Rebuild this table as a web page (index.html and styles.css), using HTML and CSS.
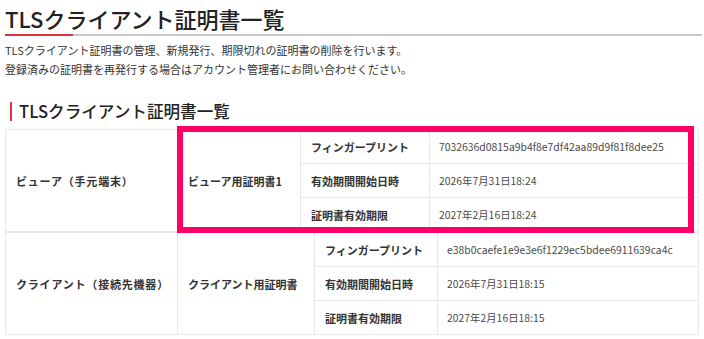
FILE: index.html
```html
<!DOCTYPE html>
<html lang="ja">
<head>
<meta charset="utf-8">
<link rel="stylesheet" href="styles.css">
</head>
<body>
<div class="page">
  <h1 class="title">TLSクライアント証明書一覧</h1>
  <p class="desc">TLSクライアント証明書の管理、新規発行、期限切れの証明書の削除を行います。<br>登録済みの証明書を再発行する場合はアカウント管理者にお問い合わせください。</p>
  <h2 class="section">TLSクライアント証明書一覧</h2>
  <div class="tables">
    <table class="cert cert-a">
      <colgroup><col class="c1"><col class="c2"><col class="c3"><col class="c4"></colgroup>
      <tr>
        <th rowspan="3" class="wide">ビューア（手元端末）</th>
        <th rowspan="3">ビューア用証明書1</th>
        <th>フィンガープリント</th>
        <td>7032636d0815a9b4f8e7df42aa89d9f81f8dee25</td>
      </tr>
      <tr><th>有効期間開始日時</th><td>2026年7月31日18:24</td></tr>
      <tr><th>証明書有効期限</th><td>2027年2月16日18:24</td></tr>
    </table>
    <table class="cert cert-b">
      <colgroup><col class="c1"><col class="c2"><col class="c3"><col class="c4"></colgroup>
      <tr>
        <th rowspan="3" class="wide">クライアント（接続先機器）</th>
        <th rowspan="3">クライアント用証明書</th>
        <th>フィンガープリント</th>
        <td>e38b0caefe1e9e3e6f1229ec5bdee6911639ca4c</td>
      </tr>
      <tr><th>有効期間開始日時</th><td>2026年7月31日18:15</td></tr>
      <tr><th>証明書有効期限</th><td>2027年2月16日18:15</td></tr>
    </table>
    <div class="highlight"></div>
  </div>
</div>
</body>
</html>
```

FILE: styles.css
```css
* { box-sizing: border-box; }
html, body { margin: 0; padding: 0; background: #fff; }
body {
  font-family: "Noto Sans CJK JP", "Noto Sans", sans-serif;
  color: #333;
}
.page { padding: 0 2px 0 5px; }
.title {
  margin: 0;
  padding-top: 3px;
  font-size: 22px;
  font-weight: 500;
  line-height: 30px;
  color: #222;
  border-bottom: 2px solid #ccc;
  border-image: linear-gradient(to right, #d9363e 69px, #c8c8c8 69px) 1;
  padding-bottom: 1px;
}
.desc {
  margin: 5px 0 0;
  font-size: 11px;
  line-height: 19px;
  color: #333;
}
.section {
  margin: 23px 0 0 5px;
  padding-left: 7px;
  border-left: 2px solid #d9363e;
  font-size: 16.6px;
  font-weight: 500;
  line-height: 19px;
  color: #222;
}
.tables { position: relative; margin-top: 8px; width: 693px; }
.cert {
  width: 693px;
  table-layout: fixed;
  border-collapse: collapse;
  font-size: 11px;
}
.cert th, .cert td {
  border: 1px solid #e7e7eb;
  padding: 0 10px;
  text-align: left;
  height: 34px;
  white-space: nowrap;
}
.cert th { font-weight: 700; color: #333; }
.cert th.wide { letter-spacing: 0.8px; }
.cert td { font-weight: 400; color: #4a4a4a; padding-left: 9px; font-size: 10.4px; }
.cert-a .c1 { width: 172px; }
.cert-a .c2 { width: 123px; }
.cert-a .c3 { width: 129px; }
.cert-a .c4 { width: 269px; }
.cert-b .c1 { width: 172px; }
.cert-b .c2 { width: 137px; }
.cert-b .c3 { width: 123px; }
.cert-b .c4 { width: 261px; }
.highlight {
  position: absolute;
  left: 172px;
  top: -3px;
  width: 517px;
  height: 107px;
  border: 6px solid #ff0066;
}
```
